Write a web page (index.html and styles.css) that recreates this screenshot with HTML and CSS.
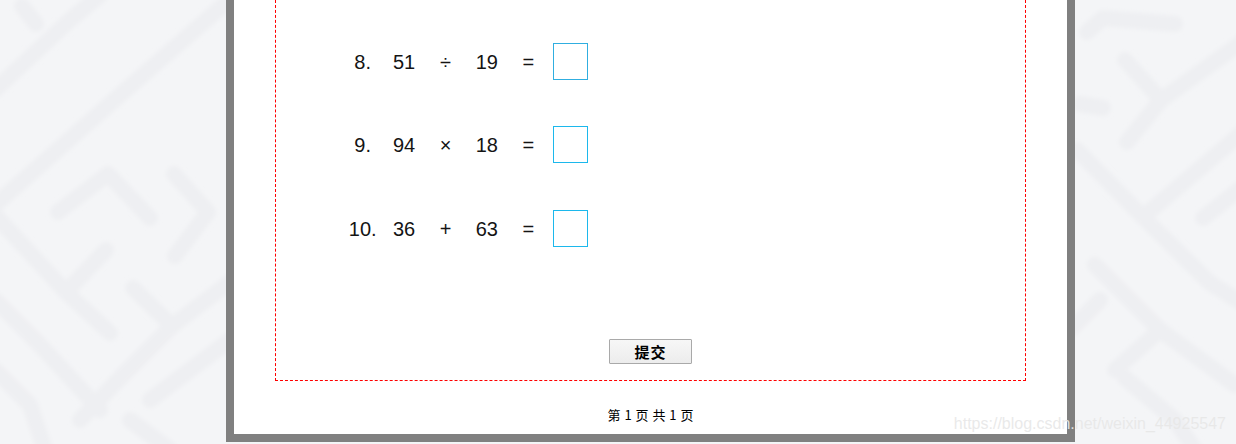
FILE: index.html
```html
<!DOCTYPE html>
<html lang="zh-CN">
<head>
<meta charset="utf-8">
<title>口算练习</title>
<link rel="stylesheet" href="styles.css">
</head>
<body>
<div class="page">
  <div class="side side-left">
    <svg width="226" height="444" viewBox="0 0 226 444">
      <defs><filter id="bl" x="-10%" y="-10%" width="120%" height="120%"><feGaussianBlur stdDeviation="2.2"/></filter></defs>
      <g fill="none" stroke="#eeeff2" stroke-width="16" stroke-linecap="round" stroke-linejoin="round" filter="url(#bl)">
        <path d="M22 6 L36 24"/>
        <path d="M-5 205 L120 95 L235 -5"/>
        <path d="M-5 90 L70 20 L100 -5"/>
        <path d="M58 212 L108 174 L150 218"/>
        <path d="M174 174 L208 212 L175 256"/>
        <path d="M-5 215 L66 292 L110 333"/>
        <path d="M66 292 L106 250"/>
        <path d="M133 288 L172 326 L230 282"/>
        <path d="M172 326 L120 378 L80 420"/>
        <path d="M-5 300 L40 345 L100 410"/>
        <path d="M-5 370 L30 405 L45 450"/>
        <path d="M150 400 L230 340"/>
        <path d="M130 420 L170 450"/>
      </g>
    </svg>
  </div>
  <div class="frame">
    <div class="sheet">
      <div class="quiz">
        <div class="q"><span>8.</span><span>51</span><span>÷</span><span>19</span><span>=</span><input class="ans ans-a" type="text"></div>
        <div class="q q-2"><span>9.</span><span>94</span><span>×</span><span>18</span><span>=</span><input class="ans" type="text"></div>
        <div class="q q-3"><span>10.</span><span>36</span><span>+</span><span>63</span><span>=</span><input class="ans" type="text"></div>
      </div>
      <div class="actions"><button class="submit" type="button">提交</button></div>
    </div>
    <div class="pager">第 1 页 共 1 页</div>
  </div>
  <div class="side side-right">
    <svg width="161" height="444" viewBox="0 0 161 444">
      <defs><filter id="br" x="-10%" y="-10%" width="120%" height="120%"><feGaussianBlur stdDeviation="2.2"/></filter></defs>
      <g fill="none" stroke="#eeeff2" stroke-width="16" stroke-linecap="round" stroke-linejoin="round" filter="url(#br)">
        <path d="M12 32 L28 18 L100 24"/>
        <path d="M50 60 L86 100 L52 142"/>
        <path d="M86 100 L170 40"/>
        <path d="M5 104 L28 108"/>
        <path d="M128 218 L170 185"/>
        <path d="M2 150 L68 217 L135 283 L170 305"/>
        <path d="M68 217 L170 130"/>
        <path d="M20 265 L85 330 L160 385"/>
        <path d="M40 370 L85 330"/>
        <path d="M50 378 L100 420 L120 450"/>
        <path d="M-5 330 L25 300"/>
      </g>
    </svg>
  </div>
</div>
<div class="watermark">https://blog.csdn.net/weixin_44925547</div>
</body>
</html>
```

FILE: styles.css
```css
html, body {
  margin: 0;
  padding: 0;
}

body {
  width: 1236px;
  height: 444px;
  overflow: hidden;
  background: #f4f5f7;
  font-family: "Liberation Sans", Arial, sans-serif;
  position: relative;
}

.page {
  display: flex;
  align-items: flex-start;
  height: 444px;
}

.side {
  height: 444px;
  overflow: hidden;
}

.side svg {
  display: block;
}

.side-left {
  width: 226px;
  flex: 0 0 226px;
}

.side-right {
  flex: 1 1 auto;
}

.frame {
  width: 849px;
  flex: 0 0 849px;
  height: 442px;
  box-sizing: border-box;
  background: #ffffff;
  border: 8px solid #808080;
  border-top: 0;
}

.sheet {
  margin: 0 41px;
  border: 1px dashed #ff0000;
  border-top: 0;
  padding: 43px 0 16px;
}

.quiz {
  margin-left: 66px;
  display: flex;
  flex-direction: column;
}

.q {
  display: grid;
  grid-template-columns: repeat(6, 41.4px);
  height: 37px;
  align-items: center;
  justify-items: center;
  font-size: 20px;
  color: #141414;
}

.q-2 {
  margin-top: 46px;
}

.q-3 {
  margin-top: 47px;
}

.q span {
  line-height: 20px;
}

.ans {
  width: 35px;
  height: 37px;
  box-sizing: border-box;
  margin: 0 0 0 2px;
  padding: 0;
  border: 1px solid #1cb8ec;
  background: #ffffff;
  outline: none;
  -webkit-appearance: none;
  appearance: none;
}

.ans-a {
  border-color: #30aee0;
}

.actions {
  margin-top: 92px;
  display: flex;
  justify-content: center;
}

.submit {
  width: 83px;
  height: 25px;
  box-sizing: border-box;
  margin: 0;
  padding: 0;
  border: 1px solid #a9a9a9;
  border-radius: 1px;
  background: linear-gradient(#f7f7f7, #ececec);
  font-family: "Noto Sans CJK SC", sans-serif;
  font-size: 15px;
  font-weight: 700;
  letter-spacing: 1px;
  line-height: 21px;
  color: #000000;
}

.pager {
  padding-top: 26px;
  text-align: center;
  font-family: "Noto Sans CJK SC", sans-serif;
  font-size: 13px;
  line-height: 16px;
  word-spacing: 1px;
  color: #000000;
}

.watermark {
  position: absolute;
  top: 416px;
  right: 10px;
  font-family: "Liberation Sans", Arial, sans-serif;
  font-size: 16px;
  line-height: 16px;
  color: rgba(232, 232, 232, 0.95);
  white-space: nowrap;
}
```
